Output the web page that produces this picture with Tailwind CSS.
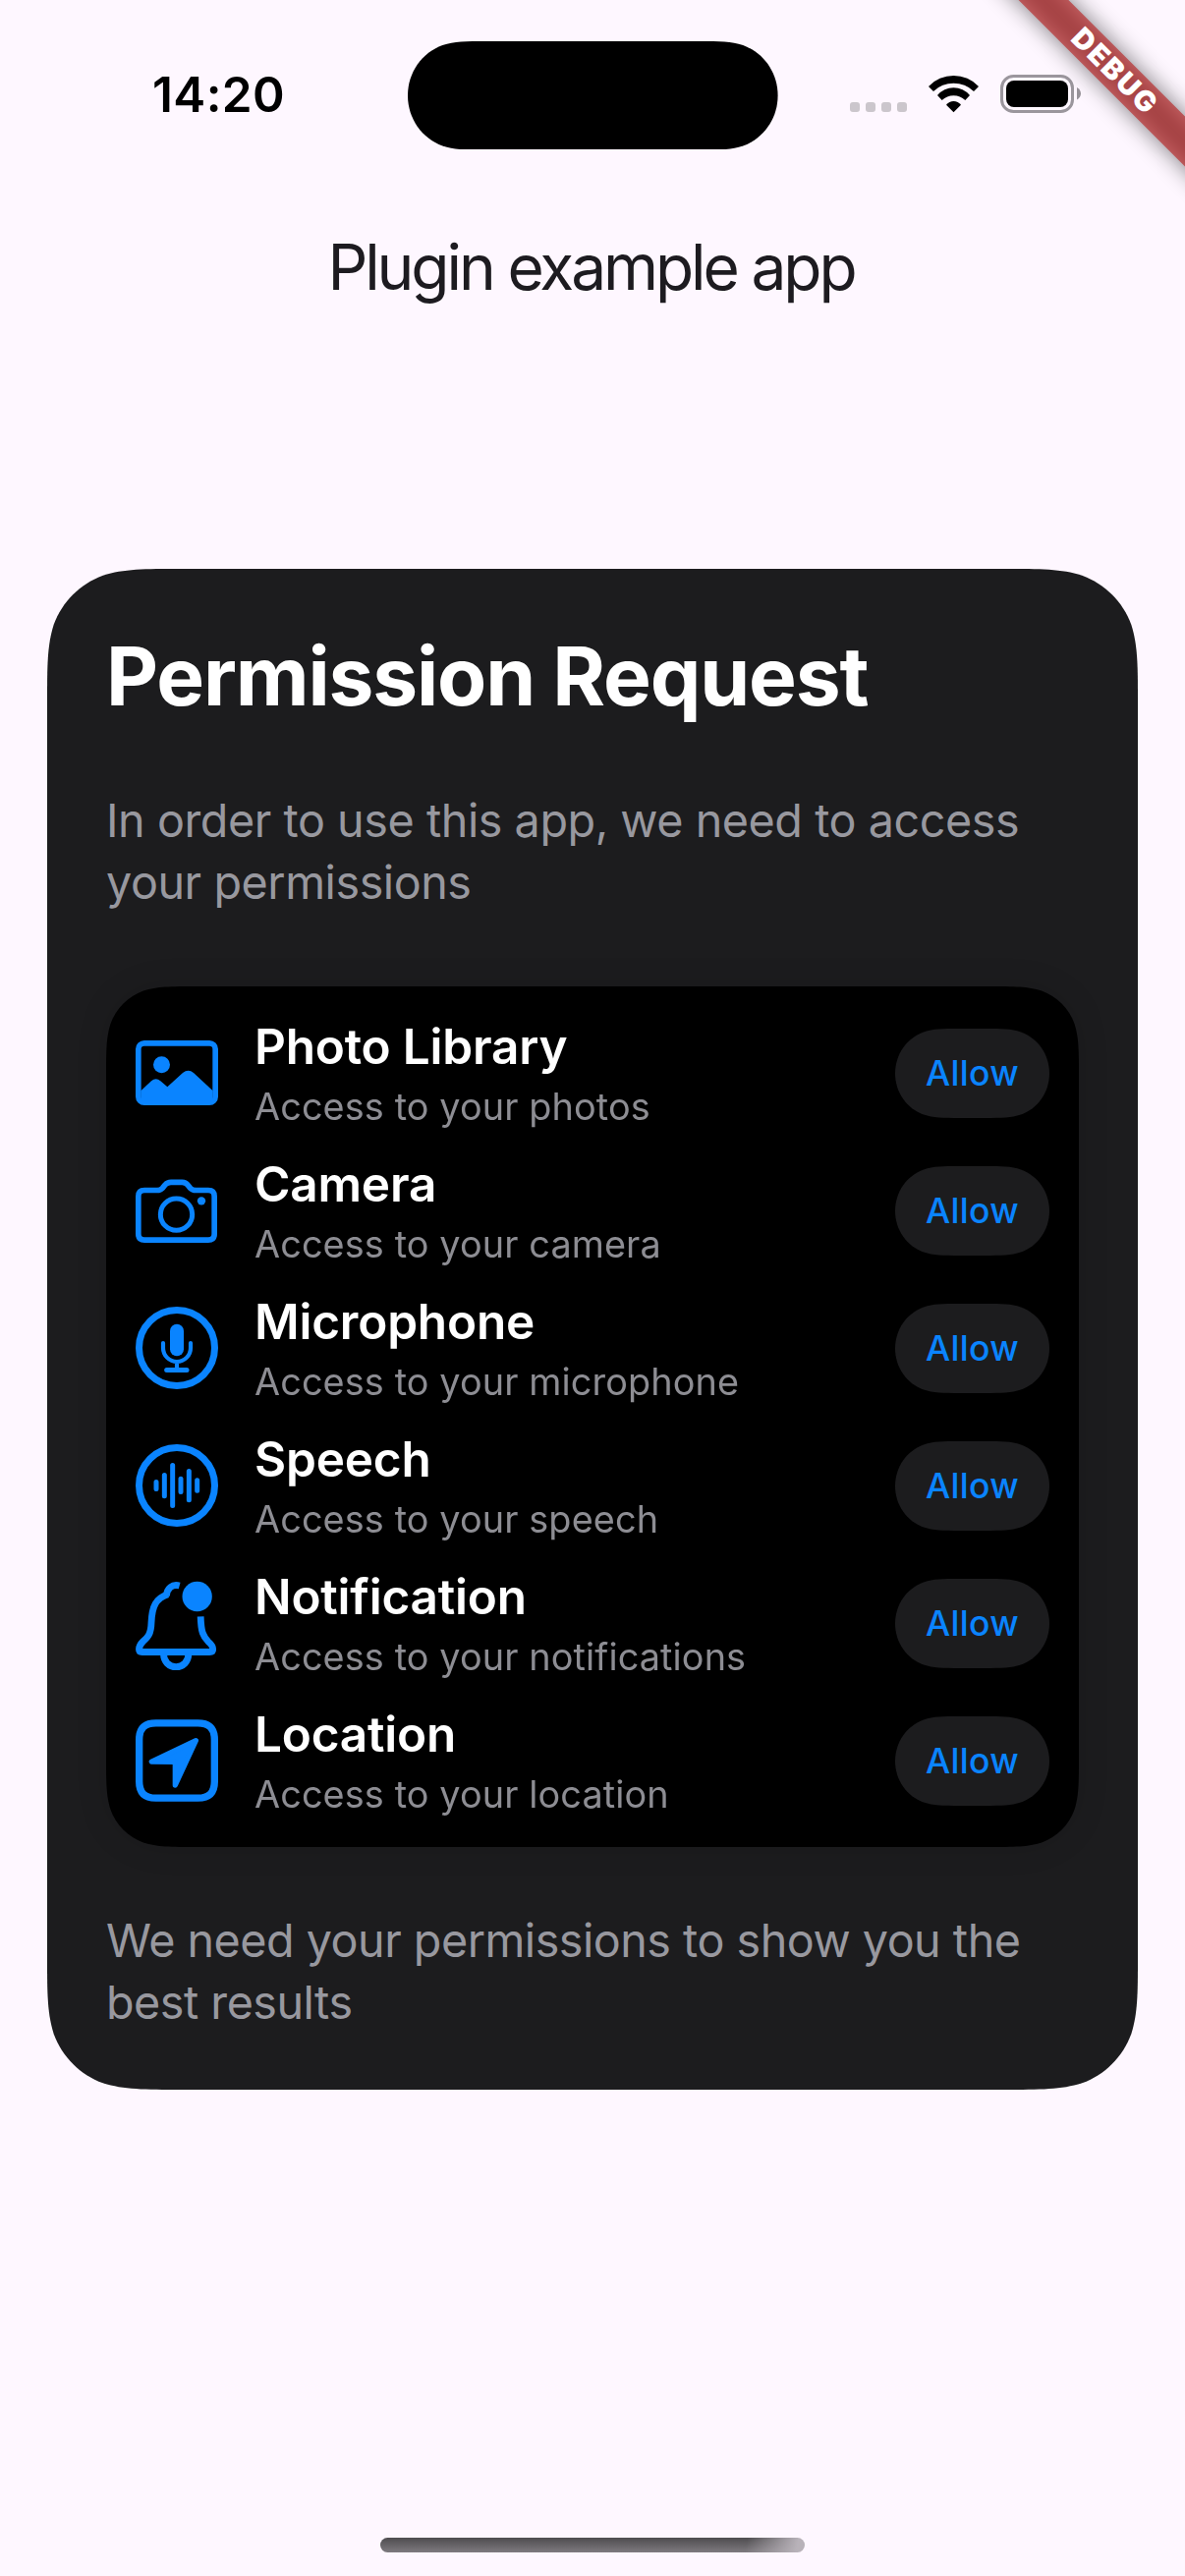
<!DOCTYPE html>
<html lang="en">
<head>
<meta charset="utf-8">
<title>Plugin example app</title>
<script src="https://cdn.jsdelivr.net/npm/@tailwindcss/browser@4"></script>
</head>
<body class="bg-[#fef7ff]">
<div class="relative flex h-[2622px] w-[1206px] flex-col overflow-hidden bg-[#fef7ff] font-['Inter',sans-serif] antialiased">

  <!-- Status bar -->
  <header class="flex h-[232px] items-start text-black">
    <div class="mt-[66px] ml-[155px] w-[260px] text-[49.5px] leading-[60px] font-semibold tracking-[0.37px]">14:20</div>
    <svg class="mt-[41.7px] h-[110.6px] w-[376.6px]" viewBox="0 0 376.6 110.6" aria-hidden="true">
      <path d="M80 0H296.6C318 0 329 0 341.2 4.1C362 11.6 376.6 31.7 376.6 55.3S362 99 341.2 106.5C329 110.6 318 110.6 296.6 110.6H80C58.5 110.6 47.5 110.6 35.4 106.5C14.6 99 0 78.9 0 55.3S14.6 11.6 35.4 4.1C47.5 0 58.5 0 80 0Z"/>
    </svg>
    <div class="mt-[76px] ml-[73.4px] flex h-[39px] items-end">
      <div class="mb-px flex gap-[6px]">
        <span class="size-[10px] rounded-[3px] bg-[#cbc6cc]"></span>
        <span class="size-[10px] rounded-[3px] bg-[#cbc6cc]"></span>
        <span class="size-[10px] rounded-[3px] bg-[#cbc6cc]"></span>
        <span class="size-[10px] rounded-[3px] bg-[#cbc6cc]"></span>
      </div>
      <svg class="ml-[21px] h-[39px] w-[53px]" viewBox="0 0 53 39" aria-hidden="true">
        <path d="M1 12A35 35 0 0 1 52 12L47 17A29.5 29.5 0 0 0 6 17Z"/>
        <path d="M10 21A21.5 21.5 0 0 1 43 21L38.3 26A17.2 17.2 0 0 0 14.7 26Z"/>
        <path d="M19 30.7A9.5 9.5 0 0 1 34 30.7L26.5 38.2Z"/>
      </svg>
      <svg class="ml-[21px] h-[39px] w-[83px]" viewBox="0 0 83 39" aria-hidden="true">
        <rect x="1.5" y="1.5" width="72" height="36" rx="12" fill="none" stroke="#9b969d" stroke-width="3"/>
        <rect x="6" y="6" width="63" height="27" rx="8"/>
        <path d="M78 13C83.300 15.500 83.300 23 78 25.500Z" fill="#98939a"/>
      </svg>
    </div>
  </header>

  <h1 class="pr-[3px] text-center text-[64px] leading-[80px] tracking-[-3.1px] text-[#1d1b20]">Plugin example app</h1>

  <!-- Permission dialog -->
  <main class="mt-[267px] ml-[48px] h-[1548px] w-[1110px] bg-[#1c1c1e] px-[60px] pt-[60px] text-white [clip-path:path('M137.6_0L972.4_0C1012_0_1031.8_0_1053.2_6.7C1076.5_15.2_1094.8_33.5_1103.3_56.8C1110_78.2_1110_98_1110_137.6L1110_1410.4C1110_1450_1110_1469.8_1103.3_1491.2C1094.8_1514.5_1076.5_1532.8_1053.2_1541.3C1031.8_1548_1012_1548_972.4_1548L137.6_1548C98_1548_78.2_1548_56.8_1541.3C33.5_1532.8_15.2_1514.5_6.7_1491.2C0_1469.8_0_1450_0_1410.4L0_137.6C0_98_0_78.2_6.7_56.8C15.2_33.5_33.5_15.2_56.8_6.7C78.2_0_98_0_137.6_0Z')]">
    <h2 class="text-[82px] leading-[100px] font-bold tracking-[-1.17px]">Permission Request</h2>
    <p class="mt-[65px] text-[46.7px] leading-[63px] tracking-[-0.45px] whitespace-nowrap text-[#98989f]">In order to use this app, we need to access<br>your permissions</p>

    <div class="mt-[74px] drop-shadow-[0_0_15px_rgba(0,0,0,0.12)]">
      <ul id="permissions" class="flex h-[876px] flex-col bg-black py-[18px] [clip-path:path('M91.7_0L898.3_0C924.7_0_937.9_0_952.1_4.5C967.6_10.1_979.9_22.4_985.5_37.9C990_52.1_990_65.3_990_91.7L990_784.3C990_810.7_990_823.9_985.5_838.1C979.9_853.6_967.6_865.9_952.1_871.5C937.9_876_924.7_876_898.3_876L91.7_876C65.3_876_52.1_876_37.9_871.5C22.4_865.9_10.1_853.6_4.5_838.1C0_823.9_0_810.7_0_784.3L0_91.7C0_65.3_0_52.1_4.5_37.9C10.1_22.4_22.4_10.1_37.9_4.5C52.1_0_65.3_0_91.7_0Z')]"></ul>
    </div>

    <p class="mt-[64px] text-[46.7px] leading-[63px] tracking-[-0.5px] whitespace-nowrap text-[#98989f]">We need your permissions to show you the<br>best results</p>
  </main>

  <!-- Home indicator -->
  <div class="mx-auto mt-[456px] h-[15px] w-[432px] rounded-full bg-[linear-gradient(100deg,transparent_86%,#b8b2b9_98%),linear-gradient(to_bottom,#4e4c4f,#7e7a7f)]"></div>

  <!-- Debug ribbon -->
  <div class="absolute top-[72.100px] left-[1133.900px] size-0 rotate-45" aria-label="Debug mode">
    <div class="absolute top-[-18px] left-[-240px] h-[36px] w-[480px] bg-black/50 blur-[11.9px]"></div>
    <div class="absolute top-[-18px] left-[-240px] flex h-[36px] w-[480px] items-center justify-center bg-[#b71c1c]/63">
      <span class="-mt-[2px] ml-[2px] text-[29px] leading-none font-black tracking-[2px] text-white">DEBUG</span>
    </div>
  </div>
</div>

<template id="row">
  <li class="flex h-[140px] items-center px-[30px]">
    <svg class="h-[100px] w-[84px] shrink-0 text-[#0a84ff]" aria-hidden="true"></svg>
    <div class="-mt-[2px] ml-[37px] flex-1 whitespace-nowrap">
      <h3 class="text-[49.5px] leading-[64px] font-semibold tracking-[-0.2px]"></h3>
      <p class="mt-[5px] text-[37.8px] leading-[48px] tracking-[0.12px] text-[#8d8d93]"></p>
    </div>
    <button class="mt-px h-[91px] w-[157px] bg-[#1c1c1e] text-[35.5px] leading-none font-medium tracking-[0.3px] text-[#0a84ff] [clip-path:path('M66_0H91C109_0_118_0_128_3.4C145_9.5_157_26_157_45.5S145_81.5_128_87.6C118_91_109_91_91_91H66C48_91_39_91_29_87.6C12_81.5_0_65_0_45.5S12_9.5_29_3.4C39_0_48_0_66_0Z')]">Allow</button>
  </li>
</template>

<script>
  const permissions = [
    ['Photo Library', 'Access to your photos', '114 156 252 300',
      '<rect x="122.500" y="215.500" width="235" height="181" rx="18" fill="none" stroke="currentColor" stroke-width="17"/><circle cx="193.500" cy="281.500" r="25.500" fill="currentColor"/><path fill="currentColor" d="M130 361L162 331Q176 319 190 331L211 349L258 306Q275 292 291 306L350 361V392H130Z"/>'],
    ['Camera', 'Access to your camera', '114 576 252 300',
      '<g fill="none" stroke="currentColor" stroke-width="17"><path d="M141 664.500H180Q190 664.500 196 658L204 648Q211 640 222 640H256Q267 640 273 648L281 658Q287 664.500 298 664.500H336Q354.500 664.500 354.500 683V798Q354.500 816.500 336 816.500H141Q122.500 816.500 122.500 798V683Q122.500 664.500 141 664.500Z"/><circle cx="238.500" cy="738.500" r="48.500" stroke-width="15"/></g><circle cx="315" cy="697" r="12.500" fill="currentColor"/>'],
    ['Microphone', 'Access to your microphone', '114 66 252 300',
      '<g fill="none" stroke="currentColor" stroke-linecap="round"><circle cx="240" cy="216" r="115.500" stroke-width="21"/><path stroke-width="12.500" d="M198 201V216A42 42 0 0 0 282 216V201M240 258V283"/><path stroke-width="15" d="M209 283.500H270"/></g><rect x="219" y="143" width="42" height="98" rx="21" fill="currentColor"/>'],
    ['Speech', 'Access to your speech', '114 486 252 300',
      '<g fill="none" stroke="currentColor" stroke-linecap="round"><circle cx="240" cy="636" r="115.500" stroke-width="21"/><path stroke-width="15" d="M177 625.500V646.500M202 604.500V668.500M227 574.500V697.500M252 615.500V655.500M277 592.500V680.500M302 620.500V651.500"/></g>'],
    ['Notification', 'Access to your notifications', '114 66 252 300',
      '<g fill="none" stroke="currentColor" stroke-width="20.500"><path d="M213 128C176 140 164 165 162 215C161 250 152 258 136 273C129 280 124.500 286 124.500 296Q124.500 304.500 134 304.500H340Q350 304.500 350 296C350 286 343 279 336 273C320 256 314 245 312.500 196"/><path d="M248 102C226 96 209 110 208 134"/><path d="M199.500 310C199.500 334 216 350 237.500 350S275.500 334 275.500 310"/></g><circle cx="302" cy="135" r="45.500" fill="currentColor"/>'],
    ['Location', 'Access to your location', '114 486 252 300',
      '<path fill="none" stroke="currentColor" stroke-width="22" d="M176 521.500H304C338 521.500 355 538 355 572V700C355 734 338 750.500 304 750.500H176C142 750.500 125 734 125 700V572C125 538 142 521.500 176 521.500Z"/><path fill="currentColor" stroke="currentColor" stroke-width="16" stroke-linejoin="round" d="M298 575L163 639.500L235 640V711Z"/>'],
  ];
  const list = document.getElementById('permissions');
  const template = document.getElementById('row');
  for (const [name, detail, viewBox, icon] of permissions) {
    const row = template.content.cloneNode(true);
    const svg = row.querySelector('svg');
    svg.setAttribute('viewBox', viewBox);
    svg.innerHTML = icon;
    row.querySelector('h3').textContent = name;
    row.querySelector('p').textContent = detail;
    list.append(row);
  }
</script>
</body>
</html>
